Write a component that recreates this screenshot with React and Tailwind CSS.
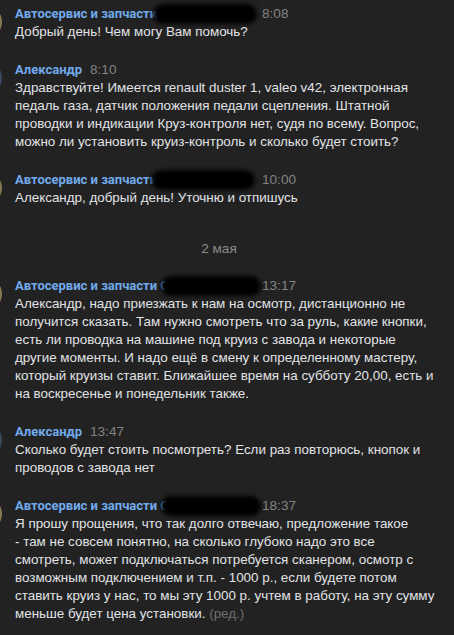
import React from "react";

const messages = [
  {
    author: "Автосервис и запчасти",
    service: true,
    time: "8:08",
    blob: "left-[138px] w-[104px]",
    lines: ["Добрый день! Чем могу Вам помочь?"],
  },
  {
    author: "Александр",
    time: "8:10",
    lines: [
      "Здравствуйте! Имеется renault duster 1, valeo v42, электронная",
      "педаль газа, датчик положения педали сцепления. Штатной",
      "проводки и индикации Круз-контроля нет, судя по всему. Вопрос,",
      "можно ли установить круиз-контроль и сколько будет стоить?",
    ],
  },
  {
    author: "Автосервис и запчасти",
    service: true,
    time: "10:00",
    blob: "left-[136px] w-[104px]",
    lines: ["Александр, добрый день! Уточню и отпишусь"],
  },
  { date: "2 мая" },
  {
    author: "Автосервис и запчасти",
    service: true,
    time: "13:17",
    blob: "left-[146px] w-[100px]",
    lines: [
      "Александр, надо приезжать к нам на осмотр, дистанционно не",
      "получится сказать. Там нужно смотреть что за руль, какие кнопки,",
      "есть ли проводка на машине под круиз с завода и некоторые",
      "другие моменты. И надо ещё в смену к определенному мастеру,",
      "который круизы ставит. Ближайшее время на субботу 20,00, есть и",
      "на воскресенье и понедельник также.",
    ],
  },
  {
    author: "Александр",
    time: "13:47",
    lines: [
      "Сколько будет стоить посмотреть? Если раз повторюсь, кнопок и",
      "проводов с завода нет",
    ],
  },
  {
    author: "Автосервис и запчасти",
    service: true,
    time: "18:37",
    edited: true,
    blob: "left-[146px] w-[100px]",
    lines: [
      "Я прошу прощения, что так долго отвечаю, предложение такое",
      "- там не совсем понятно, на сколько глубоко надо это все",
      "смотреть, может подключаться потребуется сканером, осмотр с",
      "возможным подключением и т.п. - 1000 р., если будете потом",
      "ставить круиз у нас, то мы эту 1000 р. учтем в работу, на эту сумму",
      "меньше будет цена установки.",
    ],
  },
];

function Message({ m }) {
  return (
    <div className="flex pb-[20px]">
      <div
        className={`w-[34px] h-[34px] rounded-full shrink-0 -ml-[32px] mr-[13px] ${
          m.service ? "bg-[#8a7a52]" : "bg-[#3b4a63]"
        }`}
      />
      <div className="flex flex-col min-w-0">
        <div className="flex items-center h-[18px] gap-[8px] text-[13.6px]">
          {m.service ? (
            <div className="relative w-[239px] shrink-0 whitespace-nowrap">
              <span className="font-bold text-[#71aaeb] text-[13px]" style={{ fontFamily: "Roboto, sans-serif" }}>
                {m.author} С
              </span>
              <div className={`absolute top-[-1px] h-[20px] rounded-full bg-black blur-[2px] ${m.blob}`} />
            </div>
          ) : (
            <span className="font-bold text-[#71aaeb] text-[13px]" style={{ fontFamily: "Roboto, sans-serif" }}>
              {m.author}
            </span>
          )}
          <span className="text-[#828282]">{m.time}</span>
        </div>
        {m.lines.map((l, i) => (
          <p key={i} className="text-[#e1e3e6] whitespace-nowrap">
            {l}
            {m.edited && i === m.lines.length - 1 && <span className="text-[#6f6f6f]"> (ред.)</span>}
          </p>
        ))}
      </div>
    </div>
  );
}

export default function App() {
  return (
    <div
      className="min-h-screen bg-[#222222] pt-[5px] text-[13.4px] leading-[18px] overflow-hidden"
      style={{ fontFamily: '"Liberation Sans", Arial, sans-serif' }}
    >
      {messages.map((m, i) =>
        m.date ? (
          <div key={i} className="text-center text-[#8a8a8a] text-[13.6px] pr-[16px] pt-[13px] pb-[19px]">
            {m.date}
          </div>
        ) : (
          <Message key={i} m={m} />
        )
      )}
    </div>
  );
}
